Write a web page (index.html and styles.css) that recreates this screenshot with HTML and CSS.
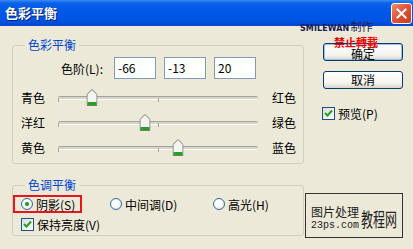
FILE: index.html
```html
<!DOCTYPE html>
<html lang="zh-CN">
<head>
    <meta charset="UTF-8">
    <title>色彩平衡</title>
    <link rel="stylesheet" href="styles.css">
</head>
<body>
    <div class="window">
        <div class="titlebar">
            <span class="title">色彩平衡</span>
            <span class="close">
                <svg width="21" height="21" viewBox="0 0 21 21">
                    <path d="M6 6 L15 15 M15 6 L6 15" stroke="#fff" stroke-width="2.2" stroke-linecap="square"/>
                </svg>
            </span>
        </div>

        <div class="main">
            <div class="left">
                <!-- Color balance -->
                <fieldset class="group group-color">
                    <legend>色彩平衡</legend>
                    <div class="levels">
                        <span class="levels-label">色阶(L):</span>
                        <span class="field">-66</span>
                        <span class="field">-13</span>
                        <span class="field">20</span>
                    </div>
                    <div class="sliders">
                        <div class="slider-row">
                            <span class="slider-label">青色</span>
                            <div class="track">
                                <span class="thumb" style="left: 17%">
                                    <svg width="11" height="17" viewBox="0 0 11 17"><path d="M0.5 5.5 L5.5 0.5 L10.5 5.5 V16.5 H0.5 Z" fill="#F4F4F0" stroke="#7A7A72"/><rect x="1" y="13" width="9" height="3" fill="#20A420"/></svg>
                                </span>
                            </div>
                            <span class="slider-label end">红色</span>
                        </div>
                        <div class="slider-row">
                            <span class="slider-label">洋红</span>
                            <div class="track">
                                <span class="thumb" style="left: 43.5%">
                                    <svg width="11" height="17" viewBox="0 0 11 17"><path d="M0.5 5.5 L5.5 0.5 L10.5 5.5 V16.5 H0.5 Z" fill="#F4F4F0" stroke="#7A7A72"/><rect x="1" y="13" width="9" height="3" fill="#20A420"/></svg>
                                </span>
                            </div>
                            <span class="slider-label end">绿色</span>
                        </div>
                        <div class="slider-row">
                            <span class="slider-label">黄色</span>
                            <div class="track">
                                <span class="thumb" style="left: 60%">
                                    <svg width="11" height="17" viewBox="0 0 11 17"><path d="M0.5 5.5 L5.5 0.5 L10.5 5.5 V16.5 H0.5 Z" fill="#F4F4F0" stroke="#7A7A72"/><rect x="1" y="13" width="9" height="3" fill="#20A420"/></svg>
                                </span>
                            </div>
                            <span class="slider-label end">蓝色</span>
                        </div>
                    </div>
                </fieldset>

                <!-- Tone balance -->
                <fieldset class="group group-tone">
                    <legend>色调平衡</legend>
                    <div class="radios">
                        <label class="option marked"><span class="radio checked"></span>阴影(S)</label>
                        <label class="option"><span class="radio"></span>中间调(D)</label>
                        <label class="option"><span class="radio"></span>高光(H)</label>
                    </div>
                    <label class="check keep">
                        <span class="checkbox">
                            <svg width="11" height="11" viewBox="0 0 11 11"><path d="M2 5 L4.5 7.5 L9 2.5" fill="none" stroke="#21A121" stroke-width="2"/></svg>
                        </span>保持亮度(V)
                    </label>
                </fieldset>
            </div>

            <div class="right">
                <button class="btn default">确定</button>
                <button class="btn cancel">取消</button>
                <label class="check preview">
                    <span class="checkbox">
                        <svg width="11" height="11" viewBox="0 0 11 11"><path d="M2 5 L4.5 7.5 L9 2.5" fill="none" stroke="#21A121" stroke-width="2"/></svg>
                    </span>预览(P)
                </label>
                <div class="watermark">
                    <div class="wm-lines">
                        <span class="wm-top">图片处理</span>
                        <span class="wm-url">23ps.com</span>
                    </div>
                    <span class="wm-big">教程网</span>
                </div>
            </div>
        </div>

        <!-- overlays stamped on the screenshot -->
        <div class="credit">SMILEWAN<span>制作</span></div>
        <div class="stamp">禁止轉載</div>
    </div>
</body>
</html>
```

FILE: styles.css
```css
body {
    margin: 0;
    padding: 0;
    background: #ECE9D8;
    font-family: "Noto Sans CJK SC", "Liberation Sans", sans-serif;
    font-size: 12px;
    color: #000;
}

.window {
    position: relative;
    width: 413px;
    height: 249px;
    overflow: hidden;
    background: #ECE9D8;
}

/* Title bar */
.titlebar {
    height: 26px;
    display: flex;
    align-items: center;
    justify-content: space-between;
    padding: 0 1px 0 5px;
    background: linear-gradient(#3A8CF2 0, #0B62EA 3px, #0058E6 40%, #0054E2 80%, #0046CC 100%);
}

.title {
    color: #fff;
    font-weight: bold;
    font-size: 13px;
    line-height: 16px;
    text-shadow: 1px 1px #0A1E7A;
}

.close {
    width: 21px;
    height: 21px;
    box-sizing: border-box;
    border: 1px solid #fff;
    border-radius: 3px;
    background: linear-gradient(135deg, #F08C6E 0%, #E2553B 45%, #C63A1C 100%);
    display: flex;
    align-items: center;
    justify-content: center;
}

.close svg {
    display: block;
}

/* Main area */
.main {
    display: flex;
    padding: 12px 0 0 12px;
}

.left {
    width: 292px;
}

.group {
    box-sizing: border-box;
    width: 292px;
    margin: 0;
    min-width: 0;
    border: 1px solid #D0D0BF;
    border-radius: 3px;
}

.group legend {
    margin-left: 12px;
    padding: 0 3px;
    color: #0046D5;
    line-height: 14px;
}

.group-color {
    padding: 5px 0 3px 0;
}

.levels {
    display: flex;
    align-items: center;
    height: 22px;
    padding-left: 48px;
}

.levels-label {
    width: 53px;
}

.field {
    box-sizing: border-box;
    width: 42px;
    height: 22px;
    margin-right: 8px;
    padding-left: 3px;
    border: 1px solid #7F9DB9;
    background: #fff;
    line-height: 20px;
}

.sliders {
    margin-top: 6px;
}

.slider-row {
    display: flex;
    align-items: center;
    height: 25px;
    padding-left: 8px;
}

.slider-label {
    width: 37px;
}

.slider-label.end {
    width: auto;
    margin-left: 14px;
}

.track {
    position: relative;
    width: 200px;
    height: 2px;
    border-top: 1px solid #A5A49A;
    border-bottom: 1px solid #fff;
    background: #D8D5C8;
    border-radius: 2px;
}

.track::before,
.track::after {
    content: "";
    position: absolute;
    top: 1px;
    width: 1px;
    height: 4px;
    background: #A5A49A;
}

.track::before {
    left: 0;
}

.track::after {
    left: 50%;
}

.thumb {
    position: absolute;
    top: -8px;
    width: 11px;
    height: 17px;
    transform: translateX(-50%);
}

.thumb svg {
    display: block;
}

.group-tone {
    margin-top: 14px;
    padding: 3px 0 4px 0;
}

.radios {
    display: grid;
    grid-template-columns: 97px 103px auto;
    height: 18px;
    align-items: center;
}

.option {
    display: flex;
    align-items: center;
    height: 18px;
}

.option.marked {
    box-sizing: border-box;
    width: 69px;
    border: 2px solid #E8161C;
    padding-left: 6px;
}

.radio {
    box-sizing: border-box;
    width: 12px;
    height: 12px;
    margin-right: 3px;
    border: 1px solid #2E6AA8;
    border-radius: 50%;
    background: radial-gradient(circle at 40% 40%, #fff 30%, #DCDBD2 100%);
    display: flex;
    align-items: center;
    justify-content: center;
}

.radio.checked::after {
    content: "";
    width: 4px;
    height: 4px;
    border-radius: 50%;
    background: #21A121;
    box-shadow: 0 0 1px #6CD36C;
}

.check {
    display: flex;
    align-items: center;
    height: 14px;
}

.keep {
    margin-top: 4px;
    padding-left: 8px;
}

.checkbox {
    box-sizing: border-box;
    width: 13px;
    height: 13px;
    margin-right: 3px;
    border: 1px solid #1C5180;
    background: linear-gradient(135deg, #DCDCD7, #fff);
    display: flex;
    align-items: center;
    justify-content: center;
}

.checkbox svg {
    display: block;
}

/* Right column */
.right {
    width: 98px;
    margin-left: 1px;
    display: flex;
    flex-direction: column;
}

.btn {
    box-sizing: border-box;
    width: 80px;
    height: 18px;
    margin-left: 18px;
    padding: 0;
    border: 1px solid #003C74;
    border-radius: 3px;
    background: linear-gradient(#FFFFFF, #F4F3EE 70%, #D8D4C8);
    font-family: "Noto Sans CJK SC", sans-serif;
    font-size: 12px;
    line-height: 16px;
    color: #000;
}

.btn.default {
    margin-top: 5px;
    padding-top: 2px;
    box-shadow: inset 0 0 0 1px #A5BDEA;
}

.btn.cancel {
    margin-top: 10px;
}

.preview {
    margin-top: 17px;
    margin-left: 17px;
}

.watermark {
    box-sizing: border-box;
    width: 98px;
    height: 45px;
    margin-top: 73px;
    border: 1px solid #333;
    display: flex;
    align-items: flex-end;
    padding: 4px 0 4px 5px;
    color: #222;
}

.wm-lines {
    display: flex;
    flex-direction: column;
}

.wm-top {
    font-size: 12px;
    line-height: 15px;
}

.wm-url {
    font-family: "Liberation Mono", monospace;
    font-size: 10px;
    line-height: 14px;
}

.wm-big {
    font-family: "Liberation Serif", "Noto Sans CJK SC", serif;
    font-size: 12px;
    line-height: 14px;
    margin-left: 2px;
    margin-bottom: 1px;
    transform: scaleY(1.6);
    transform-origin: bottom;
}

/* Stamped overlays */
.credit {
    position: absolute;
    left: 300px;
    top: 20px;
    font-family: "DejaVu Sans", sans-serif;
    font-weight: bold;
    font-size: 8px;
    letter-spacing: 0.1px;
    color: #1A1A50;
    line-height: 12px;
}

.credit span {
    font-family: "Noto Sans CJK SC", sans-serif;
    font-weight: normal;
    font-size: 11px;
    letter-spacing: 0;
    margin-left: 1px;
}

.stamp {
    position: absolute;
    left: 334px;
    top: 36px;
    font-weight: bold;
    font-size: 11px;
    line-height: 13px;
    color: #F00000;
}
```
